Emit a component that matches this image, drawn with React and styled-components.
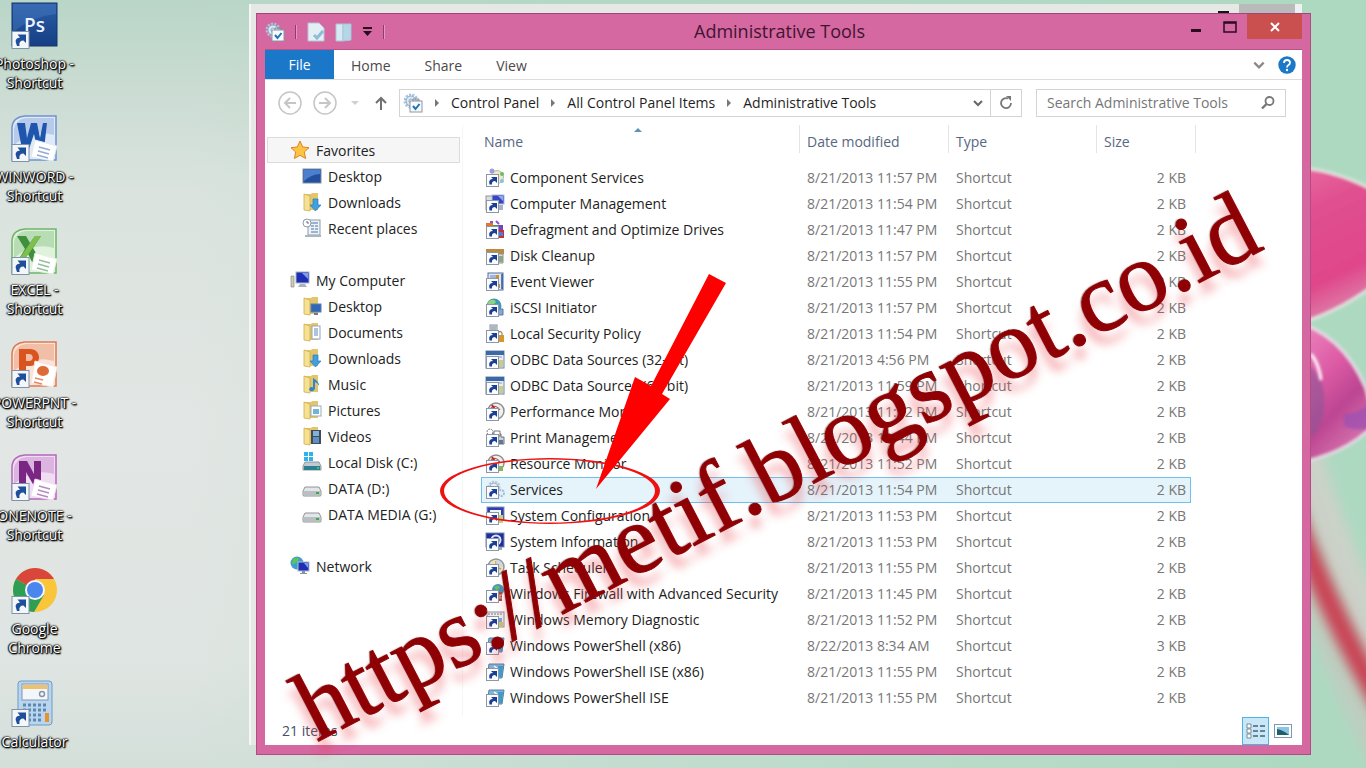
import React from "react";
import styled, { createGlobalStyle, css } from "styled-components";

const GlobalStyle = createGlobalStyle`
  *, *::before, *::after { box-sizing: border-box; }
  body { margin: 0; font-family: "Open Sans", "Noto Sans", sans-serif; font-size: 14px; color: #222; }
  button { font: inherit; color: inherit; background: none; border: 0; padding: 0; margin: 0; cursor: default; }
  a { color: inherit; text-decoration: none; }
  svg { display: block; flex: none; }
`;

const Desktop = styled.div`
  position: relative;
  display: flex;
  min-height: 100vh;
  overflow: hidden;
  background:
    linear-gradient(90deg, rgba(173, 216, 192, 0) 14%, rgba(174, 217, 193, 0.5) 50%, #aed9c1 94%),
    linear-gradient(180deg, #b9d6c8 0, #cbdcd3 90px, #dae3de 190px, #e2e6e4 420px, #dfe5e2 660px, #d4dfda 100%);
`;

const Wallpaper = styled.svg`
  position: absolute;
  right: 0;
  top: 0;
`;

const ShortcutColumn = styled.nav`
  display: flex;
  flex-direction: column;
  gap: 23px;
  width: 69px;
  padding-top: 2px;
`;

const Shortcut = styled.button`
  display: flex;
  flex-direction: column;
  align-items: center;
  gap: 5px;
`;

const ShortcutLabel = styled.span`
  display: flex;
  flex-direction: column;
  align-items: center;
  line-height: 19px;
  white-space: nowrap;
  color: #fff;
  text-shadow: 0 0 2px #000, 0 0 2px #000, 1px 1px 2px #000, 1px 1px 1px #000, -1px 0 1px #222;
`;

const BackWindow = styled.div`
  position: absolute;
  left: 249px;
  right: 64px;
  top: 4px;
  bottom: 23px;
  display: flex;
  justify-content: flex-end;
  background: #e6e8e5;
  border-left: 2px solid #f6f6f6;
`;

const BackMinimize = styled.div`
  width: 11px;
  height: 2px;
  margin: 7px 10px 0 0;
  background: #1a1018;
`;

const BackCaption = styled.div`
  width: 63px;
  height: 10px;
  background: #b9bbba;
  border-right: 7px solid #eef1ef;
`;

const Window = styled.main`
  position: relative;
  flex: 1;
  display: flex;
  flex-direction: column;
  margin: 13px 55px 13px 187px;
  padding: 0 8px 9px;
  background: #d567a1;
  border: 1px solid #b04b83;
  border-top-color: #a5447a;
`;

const TitleBar = styled.header`
  display: grid;
  grid-template-columns: 1fr auto 1fr;
  height: 35px;
`;

const QuickBar = styled.div`
  display: flex;
  align-items: center;
  gap: 10px;
`;

const QuickDivider = styled.span`
  width: 2px;
  height: 14px;
  border-left: 1px solid #8f3d69;
  border-right: 1px solid #e796bf;
`;

const Title = styled.h1`
  margin: 0;
  padding-right: 8px;
  font-size: 18px;
  font-weight: 400;
  line-height: 35px;
  color: #3f1530;
`;

const Caption = styled.div`
  display: flex;
  justify-content: flex-end;
`;

const CaptionButton = styled.button`
  display: grid;
  place-items: center;
  width: ${(p) => (p.$close ? 55 : 34)}px;
  height: 25px;
  background: ${(p) => (p.$close ? "#c9504e" : "transparent")};
`;

const Client = styled.div`
  flex: 1;
  display: flex;
  flex-direction: column;
  background: #fff;
  border-top: 1px solid #b8528a;
`;

const TabStrip = styled.div`
  display: flex;
  height: 30px;
  border-bottom: 1px solid #dcdcdc;
`;

const Tab = styled.button`
  padding: 2px 17px 0;
  color: #4a4a4a;
  ${(p) =>
    p.$file &&
    css`
      width: 69px;
      padding: 0;
      color: #fff;
      background: #1b78c9;
    `}
`;

const TabTools = styled.div`
  display: flex;
  align-items: center;
  gap: 12px;
  margin-left: auto;
  padding-right: 6px;
`;

const AddressRow = styled.div`
  display: flex;
  align-items: center;
  height: 45px;
  padding: 0 16px 0 13px;
`;

const HistoryButtons = styled.div`
  display: flex;
  align-items: center;
  gap: 11px;
  margin-right: 10px;
`;

const AddressBox = styled.div`
  flex: 1;
  display: flex;
  align-items: center;
  height: 28px;
  margin-right: 14px;
  padding-left: 3px;
  border: 1px solid #d4d4d4;
  color: #1f1f1f;
`;

const Crumb = styled.a`
  white-space: nowrap;
`;

const CrumbArrow = styled.svg`
  margin: 0 11px;
`;

const AddressTools = styled.div`
  display: flex;
  align-self: stretch;
  margin-left: auto;
`;

const AddressButton = styled.button`
  display: grid;
  place-items: center;
  width: ${(p) => (p.$divided ? 31 : 24)}px;
  border-left: ${(p) => (p.$divided ? "1px solid #d4d4d4" : "0")};
`;

const SearchBox = styled.label`
  display: flex;
  align-items: center;
  width: 250px;
  height: 28px;
  padding: 0 9px 0 10px;
  border: 1px solid #d4d4d4;
`;

const SearchInput = styled.input`
  flex: 1;
  min-width: 0;
  padding: 0;
  border: 0;
  outline: 0;
  background: none;
  font: inherit;
  color: #333;
  &::placeholder { color: #767676; opacity: 1; }
`;

const Body = styled.div`
  flex: 1;
  display: flex;
`;

const NavPane = styled.nav`
  display: flex;
  flex-direction: column;
  gap: 26px;
  width: 198px;
  padding: 12px 2px 0 2px;
  border-right: 1px solid #f6f6f6;
`;

const NavGroup = styled.ul`
  margin: 0;
  padding: 0;
  list-style: none;
`;

const NavItem = styled.a`
  display: flex;
  align-items: center;
  gap: 6px;
  height: 26px;
  padding-left: ${(p) => (p.$child ? 34 : 22)}px;
  white-space: nowrap;
  border: 1px solid ${(p) => (p.$active ? "#dcdcdc" : "transparent")};
  background: ${(p) => (p.$active ? "#f6f6f6" : "transparent")};
`;

const ListPane = styled.section`
  flex: 1;
  padding-left: 18px;
`;

const FileTable = styled.table`
  width: 710px;
  table-layout: fixed;
  border-collapse: separate;
  border-spacing: 0;
`;

const HeadCell = styled.th`
  position: relative;
  width: ${(p) => p.$w}px;
  height: 40px;
  padding: 5px 0 12px ${(p) => (p.$first ? 3 : 12)}px;
  font-weight: 400;
  text-align: left;
  color: #56677f;
  &::after {
    content: "";
    position: absolute;
    right: -5px;
    top: 0;
    width: 1px;
    height: 28px;
    background: #e4e4e4;
  }
`;

const SortMark = styled.svg`
  position: absolute;
  left: 152px;
  top: 2px;
`;

const Row = styled.tr`
  ${(p) =>
    p.$selected &&
    css`
      background: #e5f3fb;
      td { border-color: #70c0e7; }
    `}
`;

const Cell = styled.td`
  height: 26px;
  padding: 0 0 0 12px;
  line-height: 24px;
  white-space: nowrap;
  color: #777;
  border: solid transparent;
  border-width: 1px 0;
  &:last-child { padding-right: 4px; text-align: right; border-right-width: 1px; }
`;

const NameCell = styled(Cell)`
  padding-left: 3px;
  color: #1d1d1d;
  border-left-width: 1px;
`;

const FileLink = styled.a`
  display: flex;
  align-items: center;
  gap: 5px;
`;

const StatusBar = styled.footer`
  display: flex;
  align-items: center;
  height: 29px;
  padding: 0 6px 0 17px;
  color: #44506a;
`;

const ViewButtons = styled.div`
  display: flex;
  margin-left: auto;
`;

const ViewButton = styled.button`
  display: grid;
  place-items: center;
  width: 27px;
  height: 28px;
  border: 1px solid ${(p) => (p.$on ? "#4fb2df" : "transparent")};
  background: ${(p) => (p.$on ? "#c9e8f7" : "transparent")};
`;

const Marker = styled.svg`
  position: absolute;
  left: 440px;
  top: 270px;
  pointer-events: none;
`;

const Watermark = styled.div`
  position: absolute;
  left: 322px;
  top: 652px;
  font-family: "Liberation Serif", serif;
  font-size: 99px;
  line-height: 112px;
  white-space: nowrap;
  color: #8e0004;
  -webkit-text-stroke: 1px #8e0004;
  text-shadow: -1px -1px 1px rgba(120, 60, 60, 0.5), -6px 12px 10px rgba(235, 60, 70, 0.42);
  transform-origin: 0 100px;
  transform: rotate(-27.5deg);
  pointer-events: none;
`;

/* ---------- desktop icons ---------- */

const ShortcutBadge = () => (
  <g>
    <rect x="1" y="29.500" width="17" height="17" fill="#f4f7fa" stroke="#7f93a8" />
    <path d="M6 44Q2 36 9 35.500L6.500 32.500H15V41L12.500 38.500Q7.500 38.500 8.500 44Z" fill="#1f4f9a" />
  </g>
);

const OfficeTile = ({ light, mid, dark, children }) => (
  <>
    <path d="M1 12Q2 2 14 1H45V45H1Z" fill={light} stroke={mid} strokeWidth="1.500" />
    <path d="M3 14Q5 4 15 3H43V20Q22 14 3 30Z" fill={mid} opacity=".35" />
    {children}
    <path d="M24 25 46 31 42 46 20 42Z" fill="#fff" stroke={light} />
    <path d="M28 32l11 3M27 36l11 3M26 40l11 3" stroke={dark} strokeWidth="1.500" opacity=".55" />
  </>
);

const desktopArt = {
  ps: (
    <>
      <defs>
        <linearGradient id="psg" x1="0" y1="0" x2="0" y2="1">
          <stop offset="0" stopColor="#2a5da8" />
          <stop offset="1" stopColor="#163f83" />
        </linearGradient>
      </defs>
      <rect x="1" y="1" width="45" height="43" fill="url(#psg)" stroke="#12356e" />
      <path d="M2 2H45V12Q22 14 2 30Z" fill="#5b8fd0" opacity=".3" />
      <text x="13" y="30" fontFamily="Open Sans, sans-serif" fontWeight="600" fontSize="19" fill="#eef4ff">Ps</text>
    </>
  ),
  word: (
    <OfficeTile light="#dfe9f8" mid="#6f93d0" dark="#3c66b0">
      <path d="M6 8h8l2 15 4-15h6l3 15 3-15h4L33 34h-7l-3-15-5 15h-7Z" fill="#1f56ad" />
    </OfficeTile>
  ),
  excel: (
    <OfficeTile light="#e0f1dc" mid="#6db56a" dark="#3c8c45">
      <path d="M6 8h9l4 7 5-7h6l-8 12 8 14h-9l-4-8-6 8H6l8-13Z" fill="#3f8f3c" />
      <path d="M24 8h6L12 34H6Z" fill="#7ec04d" />
    </OfficeTile>
  ),
  ppt: (
    <>
      <path d="M1 12Q2 2 14 1H45V45H1Z" fill="#fbe3d8" stroke="#e0794f" strokeWidth="1.500" />
      <path d="M3 14Q5 4 15 3H43V20Q22 14 3 30Z" fill="#e0794f" opacity=".35" />
      <path d="M8 8h11c12 0 12 17 0 17h-4v8H8Zm7 5v7h3c5 0 5-7 0-7Z" fill="#d9541e" />
      <path d="M24 20 46 26 42 46 20 42Z" fill="#fff" stroke="#fbe3d8" />
      <ellipse cx="32" cy="30" rx="6" ry="5" fill="#de6a3a" />
      <path d="M24 37l8 2M23 41l8 2" stroke="#d45a2c" strokeWidth="1.500" opacity=".7" />
    </>
  ),
  onenote: (
    <OfficeTile light="#f1ddf3" mid="#b26abb" dark="#7a2c86">
      <path d="M8 7h8l7 13V7h7v25h-7l-8-14v14H8Z" fill="#7a2683" />
    </OfficeTile>
  ),
  chrome: (
    <>
      <circle cx="24" cy="23" r="22" fill="#f9c53b" />
      <path d="M24 23 5 12A22 22 0 0 1 43 12H24Z" fill="#d9473c" />
      <path d="M24 23 5 12A22 22 0 0 0 23 45L33 28Z" fill="#2f9e55" />
      <circle cx="24" cy="23" r="10" fill="#f3f6fa" />
      <circle cx="24" cy="23" r="8" fill="#4a86ee" />
    </>
  ),
  calc: (
    <>
      <rect x="7" y="1" width="34" height="44" rx="3" fill="#b9d6ee" stroke="#6b9cc8" />
      <rect x="11" y="4" width="26" height="16" fill="#f3f7fb" stroke="#7f98b0" />
      <rect x="12" y="5" width="24" height="4" fill="#eec26c" />
      <circle cx="31" cy="14" r="2.500" fill="none" stroke="#8796a6" strokeWidth="1.500" />
      <path d="M12 25h25M12 30h25M12 35h20M12 40h20" stroke="#5d88b3" strokeWidth="3" strokeDasharray="3 2" />
      <rect x="34" y="33" width="4" height="9" fill="#e8932a" />
    </>
  ),
};

const shortcuts = [
  ["ps", "Photoshop -", "Shortcut"],
  ["word", "WINWORD -", "Shortcut"],
  ["excel", "EXCEL -", "Shortcut"],
  ["ppt", "POWERPNT -", "Shortcut"],
  ["onenote", "ONENOTE -", "Shortcut"],
  ["chrome", "Google", "Chrome"],
  ["calc", "Calculator"],
];

/* ---------- navigation icons ---------- */

const Folder = ({ children }) => (
  <>
    <path d="M2 2h7l1-1h6v17H2Z" fill="#e3c66c" />
    <path d="M2 2l6 2v15l-6-1Z" fill="#f5e094" stroke="#cfae4d" strokeWidth=".8" />
    {children}
  </>
);

const navArt = {
  star: <path d="M10 1l2.700 6 6.300.700-4.700 4.300 1.300 6.500L10 15.300 4.400 18.500 5.700 12 1 7.700 7.300 7Z" fill="#fbc543" stroke="#dc8424" />,
  desktop: (
    <>
      <rect x="1" y="3" width="18" height="14" fill="#244f9c" stroke="#7c8fa8" />
      <path d="M2 4h16v4Q10 8 2 15Z" fill="#4a80cf" />
    </>
  ),
  downloads: <Folder><path d="M11 7h5v6h3l-5.500 6L8 13h3Z" fill="#3fa1e2" stroke="#2a79b8" strokeWidth=".7" /></Folder>,
  recent: (
    <>
      <rect x="6" y="2" width="12" height="15" fill="#eef2f6" stroke="#8d9cab" />
      <path d="M9 5h7M9 8h3M13 8h3M9 11h3M13 11h3M9 14h7" stroke="#7ea0c8" strokeWidth="1.500" />
      <path d="M3 17h16v2H3z" fill="#a9b6c2" />
      <circle cx="5" cy="5" r="4" fill="#fff" stroke="#8d9cab" />
      <path d="M5 3v2h2" fill="none" stroke="#667" />
    </>
  ),
  computer: (
    <>
      <rect x="6" y="2" width="13" height="11" fill="#1f2fb5" stroke="#aab4c4" />
      <path d="M12 3h6v6Z" fill="#7f9cf0" />
      <path d="M10 14h5l2 3H8Z" fill="#a9b2bf" />
      <path d="M1 6h3v11H1Z" fill="#c9cdb8" stroke="#8a8f7c" strokeWidth=".7" />
    </>
  ),
  folderDesktop: <Folder><rect x="9" y="8" width="10" height="8" fill="#3267b8" stroke="#5b7ea8" /><path d="M12 17h4v2h-4z" fill="#778" /></Folder>,
  documents: <Folder><rect x="10" y="4" width="8" height="13" fill="#fff" stroke="#8fa5bd" /><path d="M12 7h4M12 9h4M12 11h4M12 13h4" stroke="#5c8ac0" /></Folder>,
  music: <Folder><path d="M12 16a2.500 2 0 1 1-1-2.500V4q6 3 6 8-1-3-4-4v7Z" fill="#2f86cf" /></Folder>,
  pictures: <Folder><rect x="9" y="6" width="10" height="10" fill="#fff" stroke="#9aaaba" /><path d="M11 9h6v5h-6z" fill="#6fb5d8" /></Folder>,
  videos: <Folder><rect x="9" y="4" width="10" height="14" fill="#444b55" /><rect x="11" y="5" width="6" height="5" fill="#7fb2dd" /><rect x="11" y="11" width="6" height="6" fill="#5b93c6" /></Folder>,
  disk: (
    <>
      <path d="M2 0h4v4H2zM7 0h4v4H7zM2 5h4v4H2zM7 5h4v4H7z" fill="#2db3ea" />
      <path d="M3 10h14l2 4v4H1v-4Z" fill="#c3c9cf" stroke="#7f868d" strokeWidth=".8" />
      <rect x="2" y="14" width="16" height="4" fill="#2f7f93" />
      <circle cx="16" cy="16" r="1" fill="#4ade4f" />
    </>
  ),
  drive: (
    <>
      <path d="M3 9h14l2 4v4q0 1-1 1H2q-1 0-1-1v-4Z" fill="#e3e6e8" stroke="#83898e" strokeWidth=".9" />
      <path d="M2 13h16v4H2z" fill="#b9bfc3" />
      <rect x="14" y="14" width="3" height="2" fill="#36b13a" />
    </>
  ),
  network: (
    <>
      <circle cx="7" cy="7" r="6.500" fill="#3e9fce" />
      <path d="M3 3q4-3 6 0-1 3-4 4-2 3-3 0Z" fill="#5cc45f" />
      <rect x="8" y="6" width="11" height="9" fill="#1f2fb5" stroke="#b4bece" />
      <path d="M14 7h4v5Z" fill="#7f9cf0" />
      <path d="M12 15h3v2h2v1h-7v-1h2z" fill="#8892a0" />
    </>
  ),
};

const navGroups = [
  { head: ["star", "Favorites"], items: [["desktop", "Desktop"], ["downloads", "Downloads"], ["recent", "Recent places"]] },
  {
    head: ["computer", "My Computer"],
    items: [
      ["folderDesktop", "Desktop"],
      ["documents", "Documents"],
      ["downloads", "Downloads"],
      ["music", "Music"],
      ["pictures", "Pictures"],
      ["videos", "Videos"],
      ["disk", "Local Disk (C:)"],
      ["drive", "DATA (D:)"],
      ["drive", "DATA MEDIA (G:)"],
    ],
  },
  { head: ["network", "Network"], items: [] },
];

const NavIcon = ({ kind }) => (
  <svg width="20" height="20" viewBox="0 0 20 20" aria-hidden="true">{navArt[kind]}</svg>
);

/* ---------- file list ---------- */

const gauge = (
  <>
    <circle cx="11" cy="9" r="8" fill="#f1f1ee" stroke="#8f8f8f" strokeWidth="1.500" />
    <path d="M6 6q5-4 9 2" fill="none" stroke="#b05a5a" strokeWidth="1.200" />
    <path d="M7 3l4 6" stroke="#c62020" strokeWidth="2" />
  </>
);
const database = (
  <>
    <rect x="1" y="1" width="18" height="17" fill="#e9eef4" stroke="#6f86a4" />
    <rect x="1" y="1" width="18" height="4" fill="#3b68a6" />
    <path d="M3 7h14" stroke="#8aa0ba" />
    <path d="M13 10h5v7h-5z" fill="#c5cc8e" />
  </>
);
const powershell = (
  <>
    <path d="M4 2h15l-2 14H2Z" fill="#7db5dc" stroke="#5d7e9c" />
    <path d="M9 4l4 3-5 4" fill="none" stroke="#fff" strokeWidth="1.500" />
    <path d="M13 4h5l-1 11h-4z" fill="#3d9ccb" />
  </>
);

const fileArt = {
  component: (
    <>
      <circle cx="12" cy="9" r="6.500" fill="#eee8c8" stroke="#bcb896" />
      <circle cx="7" cy="3" r="2.500" fill="#9d9ee0" />
      <circle cx="17" cy="6" r="2" fill="#6dbb62" />
      <circle cx="17" cy="13" r="2" fill="#7fc4e8" />
    </>
  ),
  computer: (
    <>
      <rect x="1" y="2" width="10" height="14" fill="#dcdfe2" stroke="#8f979f" />
      <rect x="7" y="1" width="12" height="9" fill="#3647c4" stroke="#b2bacb" />
      <path d="M13 2h5v5Z" fill="#93a6f0" />
      <path d="M12 11h6v5h-6z" fill="#a8b3c0" />
    </>
  ),
  defrag: (
    <>
      <path d="M1 3h7v7H1z" fill="#e0752e" />
      <path d="M8 5h5v6H8z" fill="#4a9b3c" />
      <path d="M13 5h5v6h-5z" fill="#7b3fc0" />
      <path d="M11 10h8v8h-8z" fill="#c9322c" />
      <path d="M5 2h3M11 1l3 3" stroke="#8f52cf" strokeWidth="2" />
      <path d="M14 12h4v4h-4z" fill="#4c7ad6" />
    </>
  ),
  cleanup: (
    <>
      <path d="M1 3h18v5H1z" fill="#b98a3f" />
      <path d="M2 8h16v9H2z" fill="#d9dcd6" stroke="#8f938b" />
      <path d="M13 10h5v6h-5z" fill="#8fa486" />
    </>
  ),
  event: (
    <>
      <rect x="3" y="1" width="15" height="17" fill="#dfe8f5" stroke="#4d6ea8" />
      <path d="M5 4h9M5 6h9" stroke="#6685bc" />
      <path d="M11 3h3v8h-3z" fill="#cf8f22" />
      <path d="M13 12h2v4h-2z" fill="#cf8f22" />
      <path d="M17 2v15" stroke="#2f5596" strokeWidth="1.500" />
    </>
  ),
  iscsi: (
    <>
      <circle cx="9" cy="8" r="7.500" fill="#3f9bb8" />
      <path d="M4 3q5-3 7 1-2 3-5 3-3 3-4 0Z" fill="#8fd47a" />
      <path d="M13 11h5v6h-5z" fill="#87a7d2" stroke="#5b7ca8" />
    </>
  ),
  security: (
    <>
      <rect x="5" y="1" width="7" height="15" fill="#e0e4e9" stroke="#8692a0" />
      <path d="M6 3h5M6 5h5" stroke="#7b8a9b" />
      <path d="M13 11v-2q2-3 4 0v2" fill="none" stroke="#8d8d8d" strokeWidth="1.300" />
      <rect x="11" y="11" width="8" height="7" fill="#d8972b" />
    </>
  ),
  odbc: database,
  perf: gauge,
  resource: (
    <>
      {gauge}
      <path d="M12 12h6v5h-6z" fill="#8eb25b" />
    </>
  ),
  print: (
    <>
      <circle cx="5" cy="4" r="3" fill="#fff" stroke="#777" strokeDasharray="2 1" />
      <path d="M7 6h9v3h3v7H4V9h3Z" fill="#cdd1d5" stroke="#6d747b" />
      <path d="M9 3h6v5H9z" fill="#fff" stroke="#777" />
      <path d="M13 12h5v4h-5z" fill="#5f7898" />
    </>
  ),
  services: (
    <>
      <circle cx="9" cy="7" r="5" fill="none" stroke="#b7c9da" strokeWidth="3" strokeDasharray="2 1" />
      <circle cx="9" cy="7" r="4" fill="#e8f0f6" stroke="#9db4c8" />
      <circle cx="16" cy="13" r="3" fill="#e8f0f6" stroke="#9fbdd4" strokeWidth="2" strokeDasharray="2 1" />
    </>
  ),
  config: (
    <>
      <rect x="2" y="1" width="17" height="13" fill="#2b3fae" stroke="#8792ad" />
      <rect x="5" y="4" width="11" height="8" fill="#f3f5fb" />
      <path d="M14 9h4v8h-4z" fill="#c9cf78" />
    </>
  ),
  info: (
    <>
      <rect x="1" y="1" width="18" height="14" fill="#1c2f9b" stroke="#7a86a8" />
      <circle cx="11" cy="8" r="4.500" fill="none" stroke="#dbe3ff" strokeWidth="2" />
      <path d="M12 15h5v3h-5z" fill="#9aa4b4" />
    </>
  ),
  task: (
    <>
      <circle cx="11" cy="9" r="8" fill="#e9e2c3" stroke="#8f96a0" strokeWidth="1.500" />
      <path d="M11 3v6l5 2" fill="none" stroke="#d69c31" strokeWidth="1.500" />
      <path d="M11 9V2a7 7 0 0 1 7 7Z" fill="#c9d3e2" opacity=".8" />
    </>
  ),
  firewall: (
    <>
      <circle cx="13" cy="6" r="6" fill="#3a95c0" />
      <path d="M9 3q4-3 6 0-1 3-4 3Z" fill="#63c261" />
      <path d="M8 8h9v9H8z" fill="#a34b3e" />
      <path d="M8 11h9M8 14h9M12 8v3M15 11v3" stroke="#dcb2a8" />
    </>
  ),
  memory: (
    <>
      <rect x="2" y="2" width="17" height="15" fill="#eceff1" stroke="#8a9097" />
      <path d="M3 4h15" stroke="#777" strokeDasharray="2 1" />
      <path d="M12 8h5v5h-5z" fill="#7da6d6" />
      <path d="M13 12h5v5h-5z" fill="#ccc06a" />
    </>
  ),
  powershell,
};

const files = [
  ["component", "Component Services", "8/21/2013 11:57 PM"],
  ["computer", "Computer Management", "8/21/2013 11:54 PM"],
  ["defrag", "Defragment and Optimize Drives", "8/21/2013 11:47 PM"],
  ["cleanup", "Disk Cleanup", "8/21/2013 11:57 PM"],
  ["event", "Event Viewer", "8/21/2013 11:55 PM"],
  ["iscsi", "iSCSI Initiator", "8/21/2013 11:57 PM"],
  ["security", "Local Security Policy", "8/21/2013 11:54 PM"],
  ["odbc", "ODBC Data Sources (32-bit)", "8/21/2013 4:56 PM"],
  ["odbc", "ODBC Data Sources (64-bit)", "8/21/2013 11:59 PM"],
  ["perf", "Performance Monitor", "8/21/2013 11:52 PM"],
  ["print", "Print Management", "8/21/2013 11:44 PM"],
  ["resource", "Resource Monitor", "8/21/2013 11:52 PM"],
  ["services", "Services", "8/21/2013 11:54 PM"],
  ["config", "System Configuration", "8/21/2013 11:53 PM"],
  ["info", "System Information", "8/21/2013 11:53 PM"],
  ["task", "Task Scheduler", "8/21/2013 11:55 PM"],
  ["firewall", "Windows Firewall with Advanced Security", "8/21/2013 11:45 PM"],
  ["memory", "Windows Memory Diagnostic", "8/21/2013 11:52 PM"],
  ["powershell", "Windows PowerShell (x86)", "8/22/2013 8:34 AM", "3 KB"],
  ["powershell", "Windows PowerShell ISE (x86)", "8/21/2013 11:55 PM"],
  ["powershell", "Windows PowerShell ISE", "8/21/2013 11:55 PM"],
];

const FileIcon = ({ kind }) => (
  <svg width="20" height="20" viewBox="0 0 20 20" aria-hidden="true">
    {fileArt[kind]}
    <rect x="1.500" y="6.500" width="12" height="12" fill="#fbfcfe" stroke="#8d97a5" />
    <path d="M4.500 16.500Q3 11 8 11L6 9H12V15L10 13Q6.500 13 7 16.500Z" fill="#1b3f94" />
  </svg>
);

const ToolsIcon = ({ size }) => (
  <svg width={size} height={size} viewBox="0 0 20 20" aria-hidden="true">
    <circle cx="8" cy="8" r="6" fill="none" stroke="#a9c3dc" strokeWidth="3" strokeDasharray="2 1.200" />
    <circle cx="8" cy="8" r="5" fill="#dbe7f1" stroke="#8eabc5" />
    <circle cx="8" cy="8" r="2" fill="#fff" stroke="#8eabc5" />
    <path d="M10 8V6h6v2" fill="none" stroke="#7f8c99" />
    <rect x="7" y="8" width="12" height="11" fill="#f7fafc" stroke="#8a97a5" />
    <path d="M10 13l2.500 3 4-5" fill="none" stroke="#1e73b4" strokeWidth="2" />
  </svg>
);

const Chevron = ({ color = "#777", size = 12 }) => (
  <svg width={size} height={size} viewBox="0 0 12 12" aria-hidden="true">
    <path d="M2 4l4 4 4-4" fill="none" stroke={color} strokeWidth="2" />
  </svg>
);

const Arrow = () => (
  <CrumbArrow width="6" height="8" viewBox="0 0 6 8" aria-hidden="true">
    <path d="M1 0l4 4-4 4Z" fill="#777" />
  </CrumbArrow>
);

export default function App() {
  return (
    <>
      <GlobalStyle />
      <Desktop>
        <Wallpaper width="80" height="768" viewBox="1286 0 80 768" aria-hidden="true">
          <defs>
            <filter id="soft" x="-30%" y="-30%" width="160%" height="160%"><feGaussianBlur stdDeviation="1.500" /></filter>
            <filter id="softer" x="-100%" y="-50%" width="300%" height="200%"><feGaussianBlur stdDeviation="6" /></filter>
            <linearGradient id="petal" x1="0" y1="0" x2=".3" y2="1">
              <stop offset="0" stopColor="#ea6da4" />
              <stop offset=".3" stopColor="#e0508f" />
              <stop offset=".75" stopColor="#e0468a" />
              <stop offset="1" stopColor="#dd86ad" />
            </linearGradient>
            <linearGradient id="bud" x1="0" y1="0" x2=".6" y2="1">
              <stop offset="0" stopColor="#ee90c4" />
              <stop offset=".45" stopColor="#dd5ba5" />
              <stop offset=".7" stopColor="#bd4592" />
              <stop offset="1" stopColor="#d878b0" />
            </linearGradient>
          </defs>
          <path d="M1300 440Q1335 560 1400 690" stroke="#d3d0ca" strokeWidth="34" fill="none" opacity=".8" filter="url(#softer)" />
          <path d="M1290 520Q1330 660 1400 790" stroke="#c4c9bf" strokeWidth="30" fill="none" opacity=".7" filter="url(#softer)" />
          <path d="M1285 490Q1325 610 1400 735" stroke="#c94556" strokeWidth="22" fill="none" filter="url(#softer)" />
          <path d="M1290 167Q1340 168 1390 200V272Q1345 312 1290 326Z" fill="url(#petal)" stroke="#dfe3df" strokeWidth="3" filter="url(#soft)" />
          <path d="M1290 320Q1342 332 1366 388Q1370 404 1376 422Q1350 454 1290 465Z" fill="url(#bud)" stroke="#e3dbe4" strokeWidth="3" filter="url(#soft)" />
          <path d="M1344 414Q1356 414 1370 404V428Q1358 432 1344 426Z" fill="#9a4fb4" opacity=".7" filter="url(#soft)" />
          <path d="M1300 362Q1328 372 1324 410Q1322 436 1300 442Z" fill="#8c5596" opacity=".6" filter="url(#soft)" />
          <path d="M1311 354Q1319 364 1321 380" stroke="#fff" strokeWidth="3" fill="none" filter="url(#soft)" />
        </Wallpaper>

        <BackWindow aria-hidden="true"><BackMinimize /><BackCaption /></BackWindow>

        <ShortcutColumn aria-label="Desktop shortcuts">
          {shortcuts.map(([kind, ...lines]) => (
            <Shortcut key={kind} type="button">
              <svg width="47" height="47" viewBox="0 0 47 47" aria-hidden="true">
                {desktopArt[kind]}
                <ShortcutBadge />
              </svg>
              <ShortcutLabel>{lines.map((line) => <span key={line}>{line}</span>)}</ShortcutLabel>
            </Shortcut>
          ))}
        </ShortcutColumn>

        <Window>
          <TitleBar>
            <QuickBar>
              <ToolsIcon size={20} />
              <QuickDivider />
              <svg width="18" height="20" viewBox="0 0 18 20" aria-hidden="true">
                <path d="M1 1h11l5 5v13H1Z" fill="#e3eff5" stroke="#b3c7d6" />
                <path d="M7 13l3 3 6-7" fill="none" stroke="#8fbcd6" strokeWidth="3" />
              </svg>
              <svg width="18" height="20" viewBox="0 0 18 20" aria-hidden="true">
                <path d="M1 2h7v17H1Z" fill="#d7eaf3" stroke="#a9c6d6" />
                <path d="M8 2h8v16l-8 1Z" fill="#b4d6e6" stroke="#a9c6d6" />
              </svg>
              <svg width="10" height="10" viewBox="0 0 10 10" aria-hidden="true">
                <path d="M0 0h9v2H0zM0 4h9L4.500 9Z" fill="#2a0c1e" />
              </svg>
              <QuickDivider />
            </QuickBar>
            <Title>Administrative Tools</Title>
            <Caption>
              <CaptionButton type="button" aria-label="Minimize">
                <svg width="12" height="12" viewBox="0 0 12 12"><path d="M1 8h10v3H1z" fill="#2a0c1e" /></svg>
              </CaptionButton>
              <CaptionButton type="button" aria-label="Maximize">
                <svg width="14" height="12" viewBox="0 0 14 12"><path d="M1 1h12v10H1z M1 2h12" fill="none" stroke="#2a0c1e" strokeWidth="1.500" /></svg>
              </CaptionButton>
              <CaptionButton type="button" aria-label="Close" $close>
                <svg width="10" height="10" viewBox="0 0 10 10"><path d="M1 1l8 8M9 1l-8 8" stroke="#fff" strokeWidth="2" /></svg>
              </CaptionButton>
            </Caption>
          </TitleBar>

          <Client>
            <TabStrip>
              <Tab type="button" $file>File</Tab>
              <Tab type="button">Home</Tab>
              <Tab type="button">Share</Tab>
              <Tab type="button">View</Tab>
              <TabTools>
                <button type="button" aria-label="Expand ribbon"><Chevron color="#8a8a8a" size={14} /></button>
                <button type="button" aria-label="Help">
                  <svg width="18" height="18" viewBox="0 0 18 18">
                    <circle cx="9" cy="9" r="8.700" fill="#1b78c9" />
                    <path d="M6 7Q6 4 9 4t3 2.700Q12 8 10.500 9T9 11.500" fill="none" stroke="#fff" strokeWidth="1.800" />
                    <circle cx="9" cy="14" r="1.200" fill="#fff" />
                  </svg>
                </button>
              </TabTools>
            </TabStrip>

            <AddressRow>
              <HistoryButtons>
                <button type="button" aria-label="Back">
                  <svg width="24" height="24" viewBox="0 0 24 24"><g fill="none" stroke="#c6c6c6" strokeWidth="1.500"><circle cx="12" cy="12" r="11" /><path d="M18 12H7m5-5l-5 5 5 5" strokeWidth="2" /></g></svg>
                </button>
                <button type="button" aria-label="Forward">
                  <svg width="24" height="24" viewBox="0 0 24 24"><g fill="none" stroke="#c6c6c6" strokeWidth="1.500"><circle cx="12" cy="12" r="11" /><path d="M6 12h11m-5-5l5 5-5 5" strokeWidth="2" /></g></svg>
                </button>
                <button type="button" aria-label="Recent locations">
                  <svg width="14" height="10" viewBox="0 0 14 10"><path d="M3 3h8L7 7Z" fill="#cfcfcf" /></svg>
                </button>
                <button type="button" aria-label="Up">
                  <svg width="16" height="16" viewBox="0 0 16 16"><path d="M8 15V3M3 8l5-5 5 5" fill="none" stroke="#707070" strokeWidth="2" /></svg>
                </button>
              </HistoryButtons>
              <AddressBox>
                <ToolsIcon size={20} />
                <Arrow />
                <Crumb href="#control-panel">Control Panel</Crumb>
                <Arrow />
                <Crumb href="#all-items">All Control Panel Items</Crumb>
                <Arrow />
                <Crumb href="#admin-tools">Administrative Tools</Crumb>
                <AddressTools>
                  <AddressButton type="button" aria-label="Previous locations"><Chevron color="#666" /></AddressButton>
                  <AddressButton type="button" aria-label="Refresh" $divided>
                    <svg width="14" height="14" viewBox="0 0 14 14"><path d="M9 2.500A5 5 0 1 0 12 7" fill="none" stroke="#777" strokeWidth="1.800" /><path d="M7 0h5v5Z" fill="#777" /></svg>
                  </AddressButton>
                </AddressTools>
              </AddressBox>
              <SearchBox>
                <SearchInput type="search" aria-label="Search" placeholder="Search Administrative Tools" />
                <svg width="16" height="16" viewBox="0 0 16 16" aria-hidden="true"><circle cx="9.500" cy="6" r="4" fill="none" stroke="#777" strokeWidth="1.800" /><path d="M6.500 9L2 13.500" stroke="#777" strokeWidth="2.400" /></svg>
              </SearchBox>
            </AddressRow>

            <Body>
              <NavPane aria-label="Folders">
                {navGroups.map(({ head, items }) => (
                  <NavGroup key={head[1]}>
                    <li><NavItem href="#" $active={head[0] === "star"}><NavIcon kind={head[0]} />{head[1]}</NavItem></li>
                    {items.map(([kind, label]) => (
                      <li key={label}><NavItem href="#" $child><NavIcon kind={kind} />{label}</NavItem></li>
                    ))}
                  </NavGroup>
                ))}
              </NavPane>
              <ListPane>
                <FileTable>
                  <thead>
                    <tr>
                      <HeadCell $w={314} $first>
                        Name
                        <SortMark width="10" height="6" viewBox="0 0 10 6" aria-hidden="true"><path d="M1 5l4-4 4 4Z" fill="#5d93b8" /></SortMark>
                      </HeadCell>
                      <HeadCell $w={149}>Date modified</HeadCell>
                      <HeadCell $w={148}>Type</HeadCell>
                      <HeadCell $w={99}>Size</HeadCell>
                    </tr>
                  </thead>
                  <tbody>
                    {files.map(([kind, name, date, size = "2 KB"]) => (
                      <Row key={name} $selected={kind === "services"}>
                        <NameCell><FileLink href="#"><FileIcon kind={kind} />{name}</FileLink></NameCell>
                        <Cell>{date}</Cell>
                        <Cell>Shortcut</Cell>
                        <Cell>{size}</Cell>
                      </Row>
                    ))}
                  </tbody>
                </FileTable>
              </ListPane>
            </Body>

            <StatusBar>
              21 items
              <ViewButtons>
                <ViewButton type="button" aria-label="Details view" $on>
                  <svg width="20" height="16" viewBox="0 0 20 16">
                    <path d="M1 1h4v4H1zM1 6h4v4H1zM1 11h4v4H1z" fill="#fff" stroke="#7b8b99" />
                    <path d="M7 3h5M14 3h5M7 8h5M14 8h5M7 13h5M14 13h5" stroke="#4b6274" strokeWidth="1.400" />
                  </svg>
                </ViewButton>
                <ViewButton type="button" aria-label="Large icons view">
                  <svg width="18" height="14" viewBox="0 0 18 14">
                    <rect x=".5" y=".5" width="17" height="13" fill="#fff" stroke="#7f98ac" />
                    <path d="M3 3h12v8H3z" fill="#8ac6e8" />
                    <path d="M3 5q6 1 12 6H3Z" fill="#1f5f66" />
                  </svg>
                </ViewButton>
              </ViewButtons>
            </StatusBar>
          </Client>
        </Window>

        <Marker width="290" height="260" viewBox="440 270 290 260" aria-hidden="true">
          <path fillRule="evenodd" fill="#ee1111" d="M440 491a110 33 0 1 0 220 0a110 33 0 1 0-220 0ZM444 491a105.500 31.500 0 1 1 211 0a105.500 31.500 0 1 1-211 0Z" />
          <path d="M709 274L726 283 662 394 670 399 596 489 635 377 651 386Z" fill="#fe0000" />
        </Marker>
        <Watermark>https://metif.blogspot.co.id</Watermark>
      </Desktop>
    </>
  );
}
